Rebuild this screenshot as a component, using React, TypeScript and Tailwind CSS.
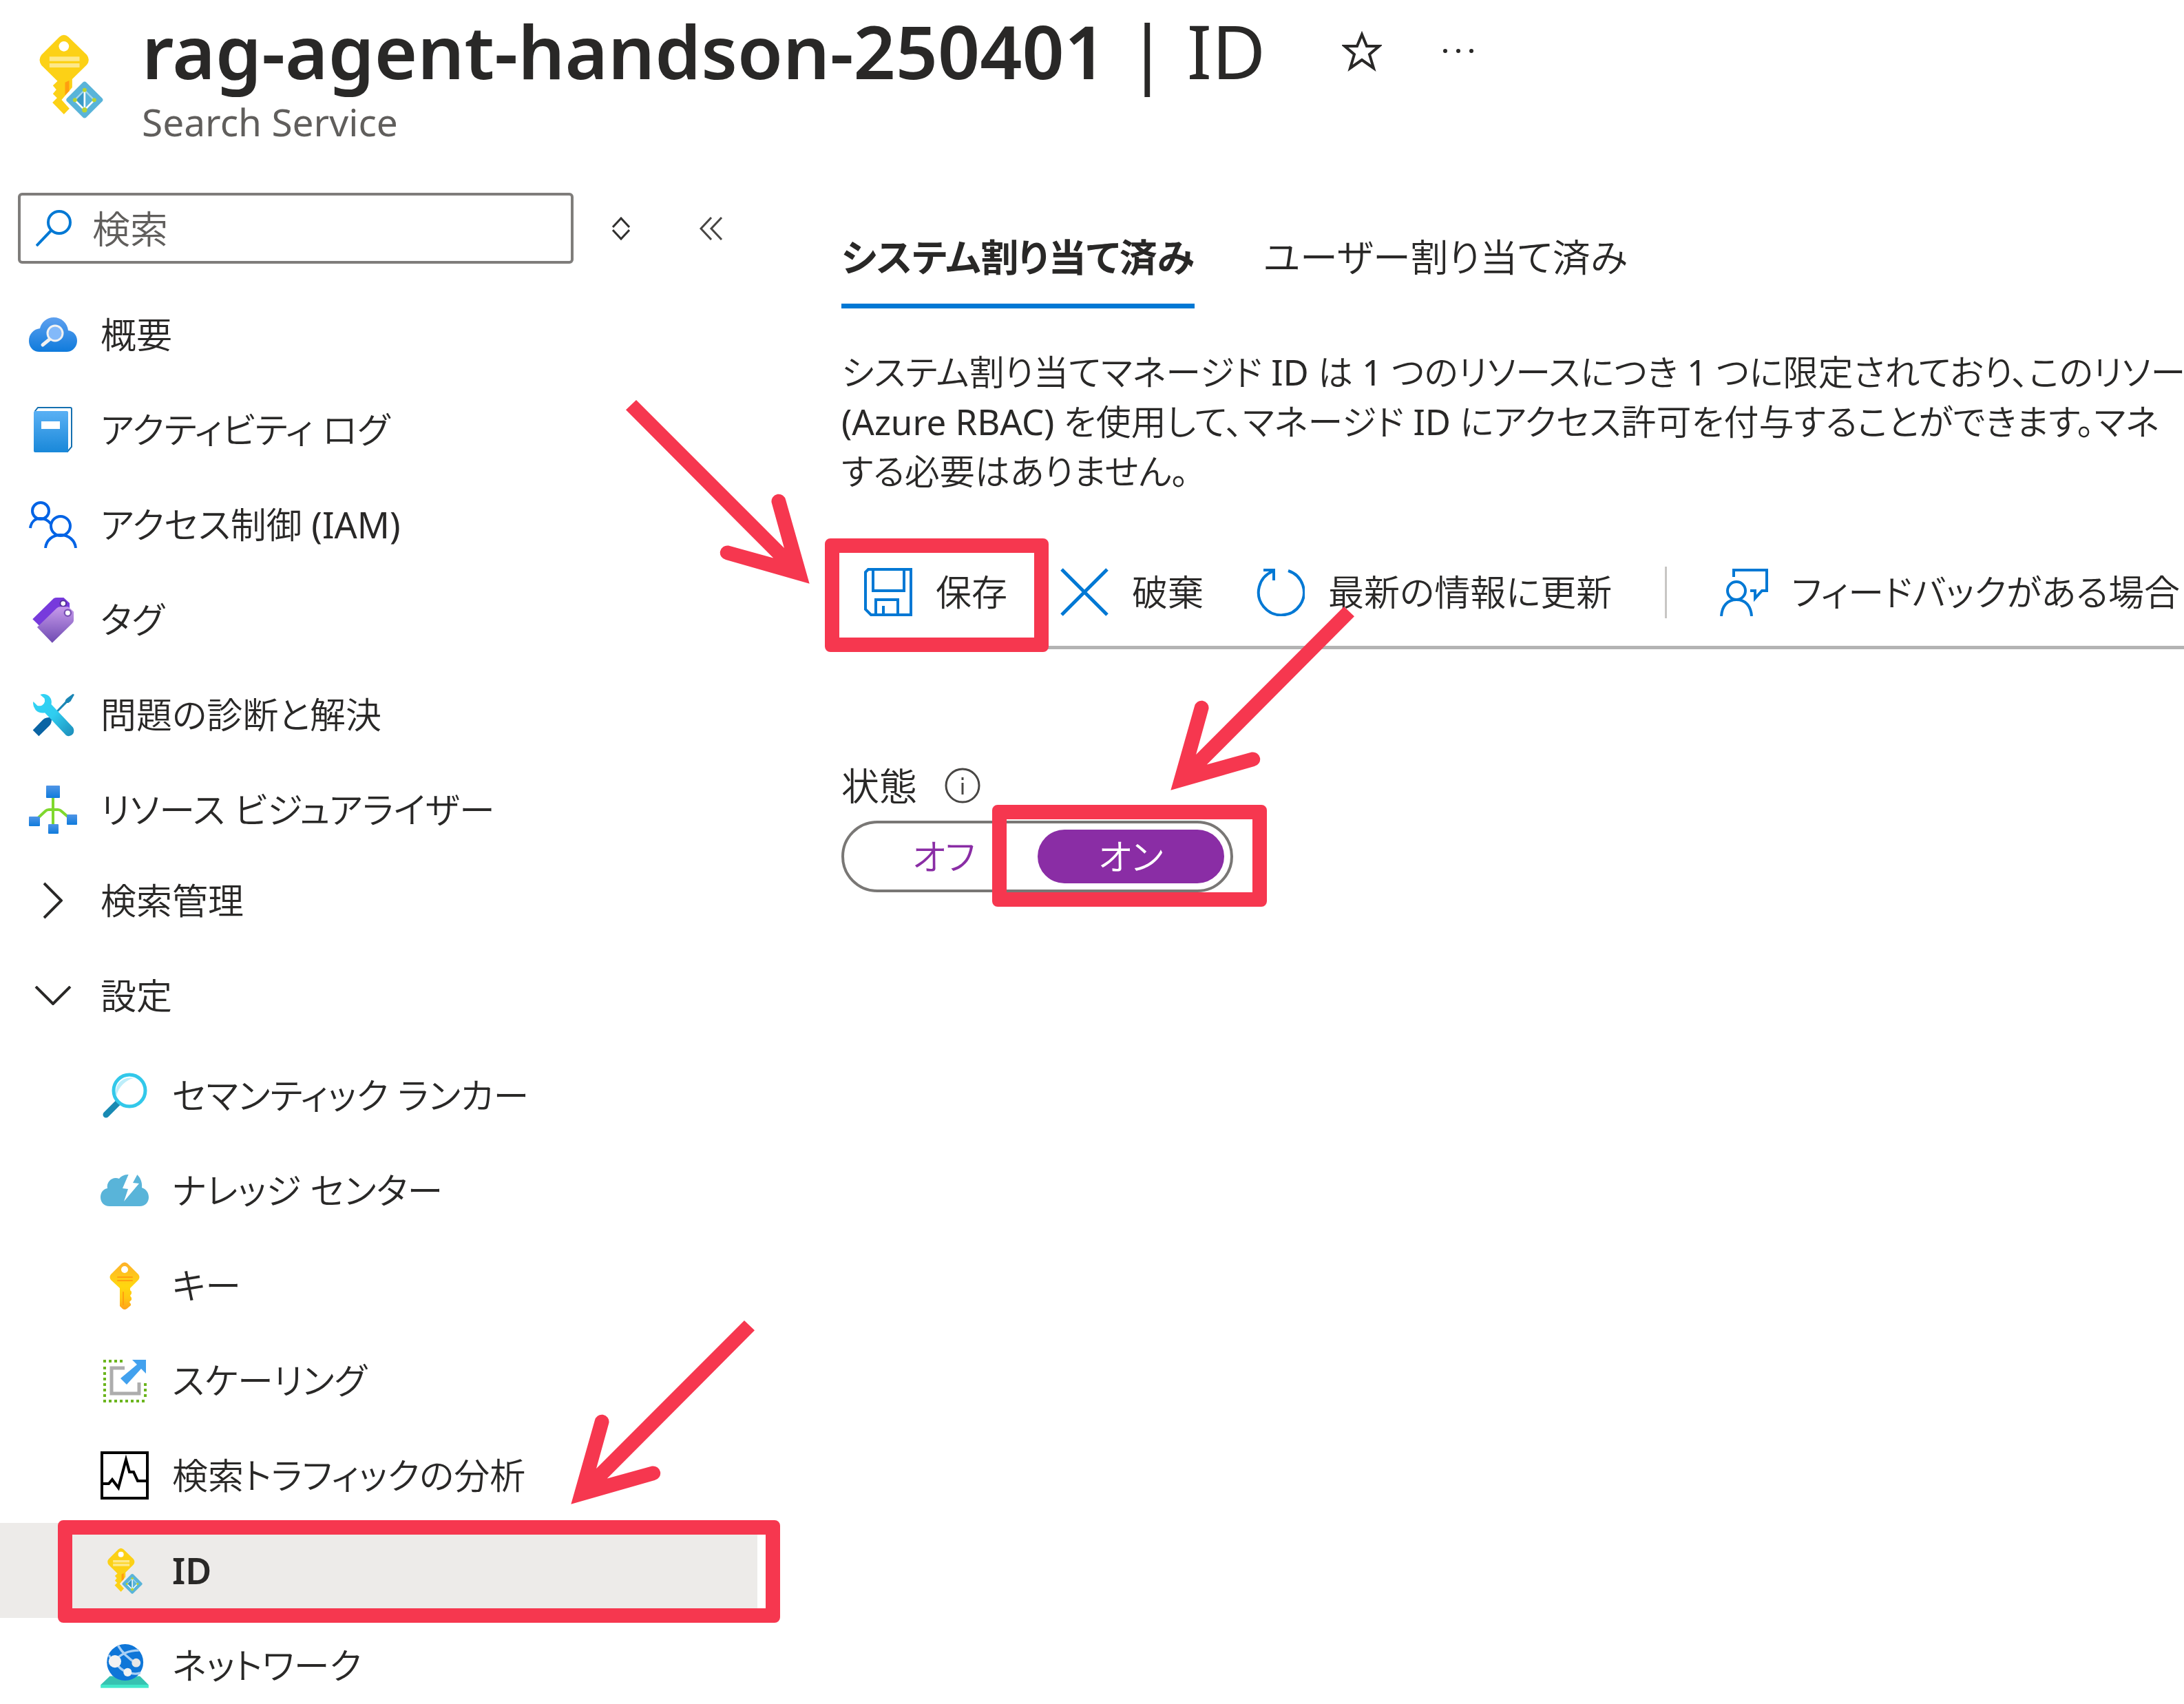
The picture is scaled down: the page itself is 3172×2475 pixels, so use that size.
import type { ReactNode } from 'react';

/* ---------- Annotation ---------- */

function Arrow({ className }: { className: string }) {
  return (
    <svg viewBox="28 64 800 800" className={`absolute h-[267px] w-[267px] ${className}`} fill="#f6374f" aria-hidden="true">
      <path d="M827 863 L724 500 A31 31 0 0 0 662 510 L717 708 L73 64 L28 107 L670 752 L475 698 A31 31 0 0 0 463 759 Z" />
    </svg>
  );
}

function Callout({ box, arrow }: { box: string; arrow: string }) {
  return (
    <div className={`pointer-events-none absolute z-10 ${box}`} aria-hidden="true">
      <div className="h-full w-full rounded-[8px] border-[21px] border-[#f6374f]" />
      <Arrow className={arrow} />
    </div>
  );
}

/* ---------- Icons ---------- */

function IdentityKeyIcon({ className }: { className: string }) {
  return (
    <svg viewBox="45 25 290 375" className={className} aria-hidden="true">
      <path
        d="M138 42 Q158 24 178 42 L258 120 Q274 142 258 163 L194 226 V262 L148 316 L182 354 L158 379 L108 328 L128 308 L110 290 L125 272 L110 254 L130 234 L60 165 Q44 142 60 120 Z"
        fill="#fcd116"
      />
      <path d="M163 240 L181 232 V278 L163 296 Z" fill="#ff9e0f" />
      <circle cx="158" cy="83" r="22" fill="#fff" />
      <path d="M95 128 H226 V147 H95 Z M95 157 H226 V175 H95 Z" fill="#fde88a" />
      <path d="M240 240 Q248 233 256 240 L325 309 Q331 316 325 323 L256 392 Q248 399 240 392 L171 323 Q165 316 171 309 Z" fill="#59b4d9" />
      <path d="M246 280 L212 316 L246 352 Z" fill="#3999c6" />
      <path d="M250 280 L284 316 L250 352 Z" fill="#59b4d9" />
      <path d="M248 274 L205 317 M248 274 L290 317" fill="none" stroke="#a5d6ec" strokeWidth="7" />
      <path d="M205 317 L248 360 L290 317 M248 274 V360" fill="none" stroke="#fff" strokeWidth="8" />
      <g fill="#b8d432">
        <circle cx="248" cy="273" r="9" />
        <circle cx="206" cy="317" r="9" />
        <circle cx="290" cy="317" r="9" />
        <circle cx="248" cy="360" r="11" />
      </g>
    </svg>
  );
}

function OverviewIcon() {
  return (
    <svg viewBox="0 0 70 50" className="h-[50px] w-[70px]" aria-hidden="true">
      <defs>
        <linearGradient id="cloud" x1="0" y1="0" x2="0" y2="1">
          <stop offset="0" stopColor="#5ea0ef" />
          <stop offset="1" stopColor="#0f7bdc" />
        </linearGradient>
      </defs>
      <path d="M15 50 C6 50 0 43 0 34 C0 24 7 17 16 16 C18 7 26 0 36 0 C47 0 56 8 57 19 C65 20 70 26 70 34 C70 43 63 50 55 50 Z" fill="url(#cloud)" />
      <path d="M31 31 L20 40" stroke="#f2f2f2" strokeWidth="5" strokeLinecap="round" />
      <circle cx="38" cy="23" r="11" fill="#83b9f9" stroke="#f2f2f2" strokeWidth="3" />
    </svg>
  );
}

function LogIcon() {
  return (
    <svg viewBox="0 0 56 66" className="h-[66px] w-[56px]" aria-hidden="true">
      <defs>
        <linearGradient id="book" x1="0" y1="0" x2="0" y2="1">
          <stop offset="0" stopColor="#5ab0f4" />
          <stop offset="1" stopColor="#1988d9" />
        </linearGradient>
      </defs>
      <path d="M2 6 L6 1 H53 Q55 1 55 3 V58 L49 65 H4 Z" fill="#fff" stroke="#1470b0" strokeWidth="2" />
      <rect x="0" y="6" width="50" height="60" rx="2" fill="url(#book)" />
      <rect x="11" y="21" width="27" height="11" fill="#fff" />
    </svg>
  );
}

function AccessIcon() {
  return (
    <svg viewBox="0 0 70 68" className="h-[68px] w-[70px]" fill="none" stroke="#0063e5" strokeWidth="4" aria-hidden="true">
      <circle cx="17" cy="14" r="12" />
      <circle cx="46" cy="36" r="14" />
      <path d="M2 39 C3 30 9 25 17 25 C23 25 28 28 32 33" />
      <path d="M24 68 C25 57 34 49 46 49 C58 49 67 57 68 68" />
    </svg>
  );
}

function TagIcon() {
  return (
    <svg viewBox="50 25 182 202" className="h-[67px] w-[61px]" aria-hidden="true">
      <defs>
        <linearGradient id="tag" x1="0" y1="0" x2="0" y2="1">
          <stop offset="0" stopColor="#c69aeb" />
          <stop offset="1" stopColor="#6f4bb2" />
        </linearGradient>
      </defs>
      <path d="M50 122 L142 32 Q148 28 156 28 H186 L212 52 V80 L80 152 Z" fill="#773adc" />
      <circle cx="184" cy="54" r="13" fill="#fff" stroke="#552f99" strokeWidth="6" />
      <path d="M70 158 L156 74 Q162 68 172 68 H206 L230 90 V128 Q230 134 224 140 L136 226 Z" fill="url(#tag)" />
      <circle cx="204" cy="95" r="14" fill="#fff" stroke="#7b52b5" strokeWidth="7" />
    </svg>
  );
}

function DiagnoseIcon() {
  return (
    <svg viewBox="50 448 182 188" className="h-[63px] w-[61px]" aria-hidden="true">
      <defs>
        <linearGradient id="wrench" x1="0" y1="0" x2="1" y2="1">
          <stop offset="0" stopColor="#32d4f5" />
          <stop offset="0.5" stopColor="#2fcdf0" />
          <stop offset="1" stopColor="#1c8bb8" />
        </linearGradient>
      </defs>
      <path d="M156 534 L150 528 L192 484 Q192 474 202 468 L226 450 L232 454 L216 482 Q208 490 200 490 Z" fill="#1a86b5" />
      <path d="M52 608 L96 562 Q102 556 112 554 L128 552 L134 560 L132 574 Q130 582 124 588 L78 634 Z" fill="#0a64a4" />
      <path
        d="M84 454 Q106 446 124 462 Q136 476 132 496 L226 596 Q234 610 226 624 Q212 640 196 630 L104 532 Q80 536 64 520 Q50 502 54 484 L72 502 Q82 504 92 500 Q102 494 104 484 Q104 474 102 470 Z"
        fill="url(#wrench)"
      />
    </svg>
  );
}

function VisualizerIcon() {
  return (
    <svg viewBox="0 0 70 70" className="h-[70px] w-[70px]" aria-hidden="true">
      <defs>
        <linearGradient id="node" x1="0" y1="0" x2="0" y2="1">
          <stop offset="0" stopColor="#5095e6" />
          <stop offset="1" stopColor="#0f7bdc" />
        </linearGradient>
      </defs>
      <path d="M35 18 V56 M10 50 L24 37 Q26 35 29 35 H42 Q45 35 47 37 L62 50" fill="none" stroke="#7fd82e" strokeWidth="4" />
      <g fill="url(#node)">
        <rect x="25" y="0" width="20" height="18" rx="1" />
        <rect x="0" y="45" width="16" height="14" rx="1" />
        <rect x="28" y="56" width="15" height="14" rx="1" />
        <rect x="55" y="42" width="15" height="15" rx="1" />
      </g>
    </svg>
  );
}

function RankerIcon() {
  return (
    <svg viewBox="0 0 66 66" className="h-[66px] w-[66px]" aria-hidden="true">
      <path d="M6 61 L23 44" stroke="#198ab3" strokeWidth="9" strokeLinecap="round" />
      <circle cx="40" cy="26" r="23" fill="#fff" stroke="#32c8ea" strokeWidth="5" />
      <path d="M21 34 C17 18 30 5 46 8 C36 10 24 20 21 34 Z" fill="#bdeefa" />
    </svg>
  );
}

function KnowledgeIcon() {
  return (
    <svg viewBox="0 0 70 46" className="h-[46px] w-[70px]" aria-hidden="true">
      <path d="M13 46 C5 46 0 40 0 33 C0 26 4 21 10 20 C8 10 18 2 27 6 C31 1 36 0 41 0 H53 C58 4 61 12 60 19 C66 21 70 26 70 33 C70 40 65 46 57 46 Z" fill="#59b4d9" />
      <path d="M41 -1 L32 20 L40 21 L34 39 L56 13 L47 12 L54 -1 Z" fill="#fff" />
    </svg>
  );
}

function KeyIcon() {
  return (
    <svg viewBox="0 0 44 69" className="h-[69px] w-[44px]" aria-hidden="true">
      <defs>
        <linearGradient id="key" x1="0" y1="0" x2="0" y2="1">
          <stop offset="0" stopColor="#feb12a" />
          <stop offset="0.5" stopColor="#ffd70f" />
          <stop offset="0.75" stopColor="#ffc813" />
          <stop offset="1" stopColor="#fea11b" />
        </linearGradient>
      </defs>
      <path
        d="M18 2 Q22 -1 26 2 L42 18 Q45 22 42 26 L30 38 V41 L32 43 V46 L30 49 L32 52 V55 L29 58 L31 61 V63 L25 68 Q22 70 19 68 L15 64 V38 L2 26 Q-1 22 2 18 Z"
        fill="url(#key)"
      />
      <circle cx="22" cy="11" r="5" fill="#fff" />
      <path d="M12 22 H33 M12 27 H33 M20 44 V62" stroke="#ff9f0e" strokeWidth="2" strokeLinecap="round" />
    </svg>
  );
}

function ScaleIcon() {
  return (
    <svg viewBox="0 0 63 63" className="h-[63px] w-[63px]" aria-hidden="true">
      <path d="M0 3 H30 M2 11 V63 M8 61 H63 M61 55 V32" fill="none" stroke="#6bb51e" strokeWidth="4" strokeDasharray="4 4" />
      <path d="M31 13 H12 V50 H52 V34" fill="none" stroke="#adadad" strokeWidth="5" />
      <path d="M42 1 H62 V21 L55 14 L34 37 L25 28 L49 8 Z" fill="#42a1ee" />
    </svg>
  );
}

function TrafficIcon() {
  return (
    <svg viewBox="0 0 70 70" className="h-[70px] w-[70px]" fill="none" stroke="#000" aria-hidden="true">
      <rect x="2" y="2" width="66" height="66" strokeWidth="4" />
      <path d="M4 47 H12 L17 41 L26 53 L37 12 L42 30 H48 L54 43 H66" strokeWidth="4" />
    </svg>
  );
}

function NetworkIcon() {
  return (
    <svg viewBox="50 58 208 194" className="h-[65px] w-[70px]" aria-hidden="true">
      <path d="M50 238 L90 200 H220 L258 238 Z" fill="#37c2b1" />
      <rect x="50" y="237" width="208" height="14" fill="#42e8ca" />
      <circle cx="156" cy="140" r="79" fill="#0f76d8" />
      <g fill="none" stroke="#a9d0f5" strokeWidth="10">
        <path d="M112 134 Q148 88 216 88" />
        <path d="M126 68 Q152 112 204 144" />
        <path d="M112 136 Q132 172 168 184 Q200 194 222 186" />
        <path d="M86 108 Q92 124 104 134" />
      </g>
      <circle cx="112" cy="136" r="27" fill="#f2f2f2" />
      <circle cx="204" cy="142" r="19" fill="#e6e6e6" />
      <circle cx="167" cy="183" r="18" fill="#f2f2f2" />
    </svg>
  );
}

const strokeIcon = { fill: 'none', stroke: '#0078d4', strokeWidth: 4 } as const;

function SaveIcon() {
  return (
    <svg viewBox="0 0 70 70" className="h-[70px] w-[70px]" {...strokeIcon} aria-hidden="true">
      <path d="M6 2 H68 V68 H10 L2 60 V6 Z M13 2 V33 H58 V2 M17 68 V46 H49 V68 M28 68 V55" />
    </svg>
  );
}

function DiscardIcon() {
  return (
    <svg viewBox="0 0 70 70" className="h-[70px] w-[70px]" {...strokeIcon} strokeWidth={5} aria-hidden="true">
      <path d="M2 2 L68 68 M68 2 L2 68" />
    </svg>
  );
}

function RefreshIcon() {
  return (
    <svg viewBox="0 0 70 70" className="h-[70px] w-[70px]" {...strokeIcon} aria-hidden="true">
      <path d="M46 4 A33 33 0 1 1 23 5 M10 3 H25 V18" />
    </svg>
  );
}

function FeedbackIcon() {
  return (
    <svg viewBox="0 0 70 70" className="h-[70px] w-[70px]" {...strokeIcon} aria-hidden="true">
      <circle cx="24" cy="33" r="13" />
      <path d="M2 70 C3 55 11 46 24 46 C37 46 45 55 46 70 M20 13 V3 H68 V33 H61 L51 44 V33 H44" />
    </svg>
  );
}

/* ---------- Sidebar ---------- */

const textBody = 'text-[52px] leading-[72px] whitespace-nowrap';

const topItems: { label: string; icon: ReactNode }[] = [
  { label: '概要', icon: <OverviewIcon /> },
  { label: 'アクティビティ ログ', icon: <LogIcon /> },
  { label: 'アクセス制御 (IAM)', icon: <AccessIcon /> },
  { label: 'タグ', icon: <TagIcon /> },
  { label: '問題の診断と解決', icon: <DiagnoseIcon /> },
  { label: 'リソース ビジュアライザー', icon: <VisualizerIcon /> },
];

const settingItems: { label: string; icon: ReactNode; selected?: boolean }[] = [
  { label: 'セマンティック ランカー', icon: <RankerIcon /> },
  { label: 'ナレッジ センター', icon: <KnowledgeIcon /> },
  { label: 'キー', icon: <KeyIcon /> },
  { label: 'スケーリング', icon: <ScaleIcon /> },
  { label: '検索トラフィックの分析', icon: <TrafficIcon /> },
  { label: 'ID', icon: <IdentityKeyIcon className="h-[69px] w-[53px]" />, selected: true },
  { label: 'ネットワーク', icon: <NetworkIcon /> },
];

function IconSlot({ children }: { children: ReactNode }) {
  return <span className="flex w-[70px] shrink-0 items-center justify-center">{children}</span>;
}

function Sidebar() {
  return (
    <aside className="w-[1100px] shrink-0">
      <div className="flex items-center pl-[26px]">
        <label className="flex h-[103px] w-[807px] items-center gap-[29px] rounded-[6px] border-[4px] border-[#7f7d7b] pl-[22px]">
          <svg viewBox="0 0 53 53" className="h-[53px] w-[53px] shrink-0" fill="none" stroke="#0078d4" strokeWidth="4" aria-hidden="true">
            <circle cx="34" cy="18" r="16" />
            <path d="M22 30 L1 52" />
          </svg>
          <input
            type="text"
            aria-label="検索"
            placeholder="検索"
            className="min-w-0 flex-1 text-[55px] leading-[72px] outline-none placeholder:text-[#605e5c]"
          />
        </label>
        <button type="button" aria-label="すべて展開" className="ml-[56px]">
          <svg viewBox="0 0 26 34" className="h-[34px] w-[26px]" fill="none" stroke="#323130" strokeWidth="3" aria-hidden="true">
            <path d="M1 15 L13 2 L25 15 M1 19 L13 32 L25 19" />
          </svg>
        </button>
        <button type="button" aria-label="メニューを折りたたむ" className="ml-[101px]">
          <svg viewBox="0 0 34 34" className="h-[34px] w-[34px]" fill="none" stroke="#484644" strokeWidth="3" aria-hidden="true">
            <path d="M17 1 L2 17 L17 33 M32 1 L17 17 L32 33" />
          </svg>
        </button>
      </div>

      <nav className="mt-[34px]">
        <ul>
          {topItems.map((item) => (
            <li key={item.label}>
              <a href="#" className="flex h-[138px] items-center gap-[34px] pl-[42px]">
                <IconSlot>{item.icon}</IconSlot>
                <span className={textBody}>{item.label}</span>
              </a>
            </li>
          ))}
        </ul>
        <button type="button" className="flex h-[125px] w-full items-center gap-[34px] pl-[42px]">
          <IconSlot>
            <svg viewBox="0 0 28 54" className="h-[54px] w-[28px]" fill="none" stroke="#292827" strokeWidth="4" aria-hidden="true">
              <path d="M1 2 L26 27 L1 52" />
            </svg>
          </IconSlot>
          <span className={textBody}>検索管理</span>
        </button>
        <button type="button" aria-expanded="true" className="flex h-[152px] w-full items-center gap-[34px] pl-[42px]">
          <IconSlot>
            <svg viewBox="0 0 54 28" className="h-[28px] w-[54px]" fill="none" stroke="#292827" strokeWidth="4" aria-hidden="true">
              <path d="M2 1 L27 26 L52 1" />
            </svg>
          </IconSlot>
          <span className={textBody}>設定</span>
        </button>
        <ul>
          {settingItems.map((item) => (
            <li key={item.label} className="relative">
              <a
                href="#"
                aria-current={item.selected ? 'page' : undefined}
                className={`flex h-[138px] items-center gap-[34px] pl-[146px] ${item.selected ? 'bg-[#edebe9] font-semibold' : ''}`}
              >
                <IconSlot>{item.icon}</IconSlot>
                <span className={textBody}>{item.label}</span>
              </a>
              {item.selected && (
                <Callout box="-top-[4px] left-[84px] h-[149px] w-[1049px]" arrow="-top-[290px] left-[745px] -scale-x-100" />
              )}
            </li>
          ))}
        </ul>
      </nav>
    </aside>
  );
}

/* ---------- Main ---------- */

function Command({ icon, label, children }: { icon: ReactNode; label: string; children?: ReactNode }) {
  return (
    <div className="relative shrink-0">
      <button type="button" className="flex h-[156px] items-center gap-[34px]">
        {icon}
        <span className={textBody}>{label}</span>
      </button>
      {children}
    </div>
  );
}

function Main() {
  return (
    <main className="min-w-0 flex-1 pl-[122px]">
      <div role="tablist" className="flex gap-[100px] pt-[57px] text-[55px] leading-[72px] whitespace-nowrap">
        <button
          type="button"
          role="tab"
          aria-selected="true"
          className="border-b-[7px] border-[#0078d4] pb-[32px] font-['Noto_Sans','Noto_Sans_CJK_JP',sans-serif] font-bold"
        >
          システム割り当て済み
        </button>
        <button type="button" role="tab" aria-selected="false" className="border-b-[7px] border-transparent pb-[32px]">
          ユーザー割り当て済み
        </button>
      </div>

      <p className="mt-[56px] text-[51px] leading-[72px] whitespace-nowrap">
        システム割り当てマネージド ID は 1 つのリソースにつき 1 つに限定されており、このリソース
        <br />
        (Azure RBAC) を使用して、マネージド ID にアクセス許可を付与することができます。マネ
        <br />
        する必要はありません。
      </p>

      <div role="toolbar" className="mt-[62px] flex items-center gap-[77px] border-b-[5px] border-[#b3b3b3] pl-[33px]">
        <Command icon={<SaveIcon />} label="保存">
          <Callout box="top-0 -left-[57px] h-[165px] w-[325px]" arrow="-top-[201px] -left-[289px]" />
        </Command>
        <Command icon={<DiscardIcon />} label="破棄" />
        <Command icon={<RefreshIcon />} label="最新の情報に更新" />
        <div className="h-[75px] w-[3px] shrink-0 bg-[#c8c6c4]" />
        <Command icon={<FeedbackIcon />} label="フィードバックがある場合" />
      </div>

      <div className="mt-[162px] flex items-center gap-[40px]">
        <span id="state-label" className="text-[55px] leading-[72px]">
          状態
        </span>
        <button type="button" aria-label="状態の詳細">
          <svg viewBox="0 0 52 52" className="h-[52px] w-[52px]" fill="none" stroke="#484644" strokeWidth="3" aria-hidden="true">
            <circle cx="26" cy="26" r="24" />
            <path d="M26 22 V39 M26 14 V18" />
          </svg>
        </button>
      </div>
      <div
        role="radiogroup"
        aria-labelledby="state-label"
        className="relative mt-[15px] flex h-[104px] w-[569px] rounded-full border-[4px] border-[#797775] p-[9px] text-center text-[52px] leading-[78px]"
      >
        <label className="relative flex-1 rounded-full text-[#8a2da5]">
          <input type="radio" name="state" value="off" className="sr-only" />
          オフ
        </label>
        <label className="relative flex-1 rounded-full bg-[#8a2da5] text-white">
          <input type="radio" name="state" value="on" defaultChecked className="sr-only" />
          オン
        </label>
        <Callout box="-top-[27px] left-[215px] h-[148px] w-[399px]" arrow="-top-[288px] left-[259px] -scale-x-100" />
      </div>
    </main>
  );
}

export default function App() {
  return (
    <div className="h-screen overflow-hidden bg-white font-['Noto_Sans','Noto_Sans_CJK_JP_DemiLight','Noto_Sans_CJK_JP',sans-serif] text-[#292827] [font-feature-settings:'palt']">
      <header className="flex h-[280px] pt-[14px] pl-[55px]">
        <IdentityKeyIcon className="mt-[34px] h-[125px] w-[97px] shrink-0" />
        <div className="pl-[54px]">
          <div className="flex items-center text-[107px] leading-[120px] whitespace-nowrap">
            <h1 className="flex gap-[30px]">
              <span className="font-semibold">rag-agent-handson-250401</span>
              <span className="font-normal">| ID</span>
            </h1>
            <button type="button" aria-label="お気に入り" className="ml-[111px]">
              <svg viewBox="0 0 58 60" className="h-[60px] w-[58px]" fill="none" stroke="#292827" strokeWidth="4" aria-hidden="true">
                <path d="M29 6 L36 23 L54 23 L40 35 L46 55 L29 43 L12 55 L18 35 L4 23 L22 23 Z" />
              </svg>
            </button>
            <button type="button" aria-label="その他" className="ml-[88px]">
              <svg viewBox="0 0 46 8" className="h-[8px] w-[46px]" fill="#292827" aria-hidden="true">
                <circle cx="4" cy="4" r="3" />
                <circle cx="23" cy="4" r="3" />
                <circle cx="42" cy="4" r="3" />
              </svg>
            </button>
          </div>
          <p className="mt-[7px] text-[55px] leading-[72px] text-[#605e5c]">Search Service</p>
        </div>
      </header>
      <div className="flex">
        <Sidebar />
        <Main />
      </div>
    </div>
  );
}
